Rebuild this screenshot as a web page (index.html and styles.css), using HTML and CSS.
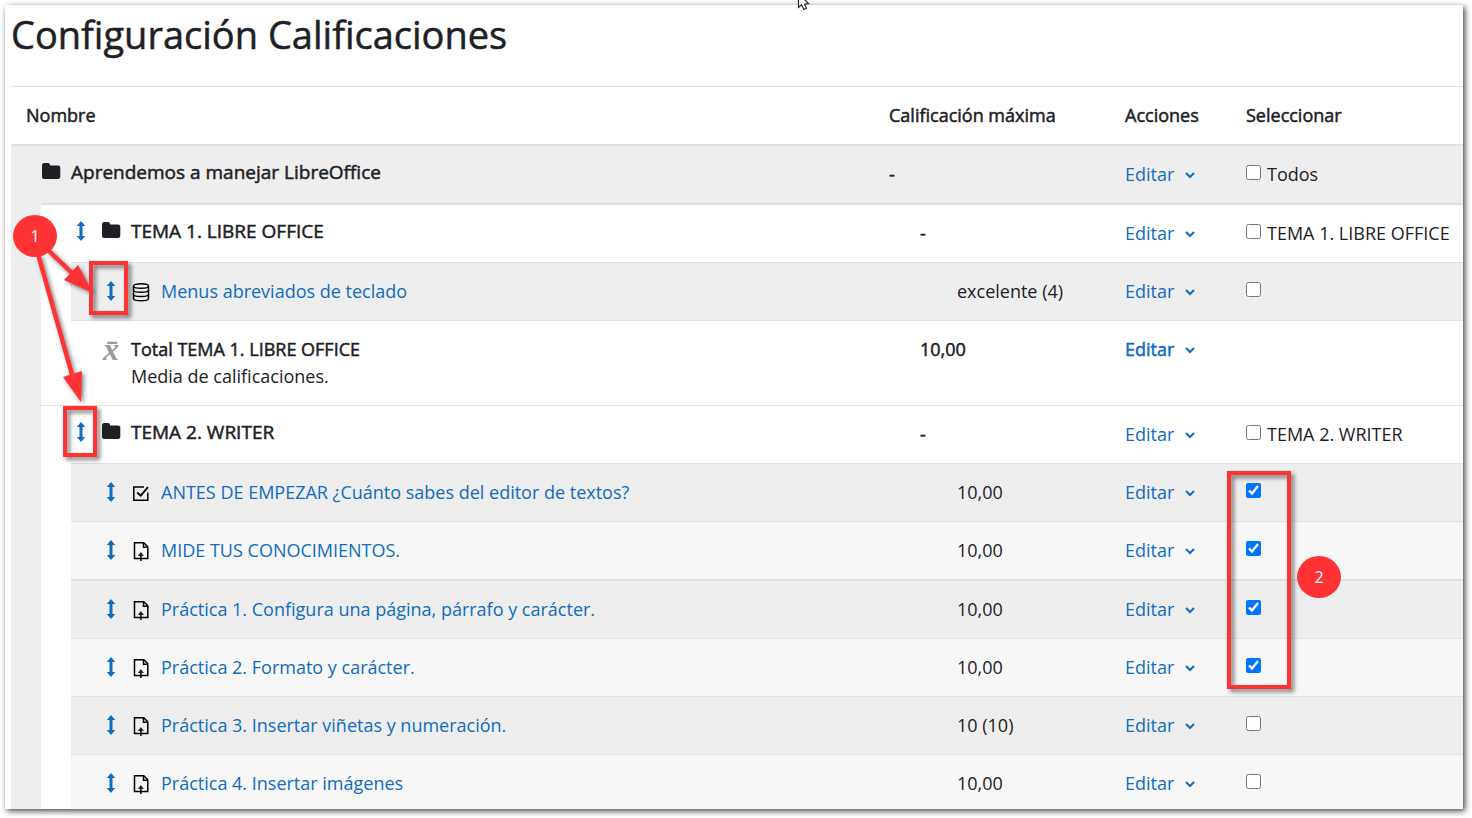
FILE: index.html
```html
<!DOCTYPE html>
<html lang="es">
<head>
<meta charset="utf-8">
<title>Configuración Calificaciones</title>
<link rel="stylesheet" href="styles.css">
</head>
<body>
<svg class="defs" aria-hidden="true">
  <symbol id="move" viewBox="0 0 20 20"><path d="M10 0l4.200 5h-2.700v10h2.700L10 20l-4.200-5h2.700V5H5.800z"/></symbol>
  <symbol id="folder" viewBox="0 0 20 20"><path d="M1 4.500C1 3.100 1.900 2 3.200 2H7c1.200 0 2 .8 2 2v.6h8c1.200 0 2.300.9 2.300 2.200v9c0 1.300-.9 2.200-2.200 2.200H3.200C1.900 18 1 17.100 1 15.800z"/></symbol>
  <symbol id="database" viewBox="0 0 20 20"><g fill="none" stroke="#000" stroke-width="1.500"><ellipse cx="10" cy="4" rx="7.500" ry="2.300"/><path d="M2.500 4v12.500c0 1.300 3.400 2.300 7.500 2.300s7.500-1 7.500-2.300V4M2.500 8c0 1.300 3.400 2.300 7.500 2.300s7.500-1 7.500-2.300M2.500 12.200c0 1.300 3.400 2.300 7.500 2.300s7.500-1 7.500-2.300"/></g></symbol>
  <symbol id="quiz" viewBox="0 0 20 20"><g fill="none" stroke="#000" stroke-width="1.500"><path d="M13 4H2.800v13.300h14V9.500"/><path d="M6.200 9.500l3.500 3.200L17 4.200" stroke-width="1.800"/></g></symbol>
  <symbol id="assign" viewBox="0 0 20 20"><g fill="none" stroke="#000" stroke-width="1.500"><path d="M9.900 17.500H3.500V1.800h9.300l4 4v11.700H9.900V20v-6"/><path d="M12.500 2v4.300H17"/></g><path d="M9.900 11l3 4h-6z"/></symbol>
  <symbol id="chevron" viewBox="0 0 12 12"><path d="M2 4l4 4 4-4" fill="none" stroke="#0f6cbf" stroke-width="2"/></symbol>
</svg>
<main class="card">
  <h1>Configuración Calificaciones</h1>
  <table>
    <colgroup><col class="c-strip"><col class="c-strip"><col><col class="c-max"><col class="c-act"><col class="c-sel"></colgroup>
    <thead>
      <tr><th colspan="3">Nombre</th><th>Calificación máxima</th><th>Acciones</th><th>Seleccionar</th></tr>
    </thead>
    <tbody>
      <tr class="odd">
        <td colspan="3"><div class="name cat"><svg class="icon"><use href="#folder"/></svg><span>Aprendemos a manejar LibreOffice</span></div></td>
        <td class="strong">-</td>
        <td><a class="edit" href="#">Editar<svg><use href="#chevron"/></svg></a></td>
        <td><label><input type="checkbox">Todos</label></td>
      </tr>
      <tr class="thick-top">
        <td class="strip gray" rowspan="11"></td>
        <td colspan="2"><div class="name cat"><svg class="icon move"><use href="#move"/></svg><svg class="icon"><use href="#folder"/></svg><span>TEMA 1. LIBRE OFFICE</span></div></td>
        <td class="strong l1">-</td>
        <td><a class="edit" href="#">Editar<svg><use href="#chevron"/></svg></a></td>
        <td><label><input type="checkbox">TEMA 1. LIBRE OFFICE</label></td>
      </tr>
      <tr class="odd">
        <td class="strip" rowspan="2"></td>
        <td><div class="name"><svg class="icon move"><use href="#move"/></svg><svg class="icon mod"><use href="#database"/></svg><a href="#">Menus abreviados de teclado</a></div></td>
        <td class="l2">excelente (4)</td>
        <td><a class="edit" href="#">Editar<svg><use href="#chevron"/></svg></a></td>
        <td><label><input type="checkbox" aria-label="Menus abreviados de teclado"></label></td>
      </tr>
      <tr>
        <td><div class="name"><span class="mean" aria-hidden="true">x̄</span><span><b>Total TEMA 1. LIBRE OFFICE</b><br>Media de calificaciones.</span></div></td>
        <td class="strong l1">10,00</td>
        <td><a class="edit strong" href="#">Editar<svg><use href="#chevron"/></svg></a></td>
        <td></td>
      </tr>
      <tr>
        <td colspan="2"><div class="name cat"><svg class="icon move"><use href="#move"/></svg><svg class="icon"><use href="#folder"/></svg><span>TEMA 2. WRITER</span></div></td>
        <td class="strong l1">-</td>
        <td><a class="edit" href="#">Editar<svg><use href="#chevron"/></svg></a></td>
        <td><label><input type="checkbox">TEMA 2. WRITER</label></td>
      </tr>
      <tr class="odd">
        <td class="strip" rowspan="7"></td>
        <td><div class="name"><svg class="icon move"><use href="#move"/></svg><svg class="icon mod"><use href="#quiz"/></svg><a href="#">ANTES DE EMPEZAR ¿Cuánto sabes del editor de textos?</a></div></td>
        <td class="l2">10,00</td>
        <td><a class="edit" href="#">Editar<svg><use href="#chevron"/></svg></a></td>
        <td><label><input type="checkbox" checked aria-label="ANTES DE EMPEZAR"></label></td>
      </tr>
      <tr class="even">
        <td><div class="name"><svg class="icon move"><use href="#move"/></svg><svg class="icon mod"><use href="#assign"/></svg><a href="#">MIDE TUS CONOCIMIENTOS.</a></div></td>
        <td class="l2">10,00</td>
        <td><a class="edit" href="#">Editar<svg><use href="#chevron"/></svg></a></td>
        <td><label><input type="checkbox" checked aria-label="MIDE TUS CONOCIMIENTOS"></label></td>
      </tr>
      <tr class="odd thick-top">
        <td><div class="name"><svg class="icon move"><use href="#move"/></svg><svg class="icon mod"><use href="#assign"/></svg><a href="#">Práctica 1. Configura una página, párrafo y carácter.</a></div></td>
        <td class="l2">10,00</td>
        <td><a class="edit" href="#">Editar<svg><use href="#chevron"/></svg></a></td>
        <td><label><input type="checkbox" checked aria-label="Práctica 1"></label></td>
      </tr>
      <tr class="even">
        <td><div class="name"><svg class="icon move"><use href="#move"/></svg><svg class="icon mod"><use href="#assign"/></svg><a href="#">Práctica 2. Formato y carácter.</a></div></td>
        <td class="l2">10,00</td>
        <td><a class="edit" href="#">Editar<svg><use href="#chevron"/></svg></a></td>
        <td><label><input type="checkbox" checked aria-label="Práctica 2"></label></td>
      </tr>
      <tr class="odd">
        <td><div class="name"><svg class="icon move"><use href="#move"/></svg><svg class="icon mod"><use href="#assign"/></svg><a href="#">Práctica 3. Insertar viñetas y numeración.</a></div></td>
        <td class="l2">10 (10)</td>
        <td><a class="edit" href="#">Editar<svg><use href="#chevron"/></svg></a></td>
        <td><label><input type="checkbox" aria-label="Práctica 3"></label></td>
      </tr>
      <tr class="even">
        <td><div class="name"><svg class="icon move"><use href="#move"/></svg><svg class="icon mod"><use href="#assign"/></svg><a href="#">Práctica 4. Insertar imágenes</a></div></td>
        <td class="l2">10,00</td>
        <td><a class="edit" href="#">Editar<svg><use href="#chevron"/></svg></a></td>
        <td><label><input type="checkbox" aria-label="Práctica 4"></label></td>
      </tr>
    </tbody>
  </table>
</main>
<svg class="arrows" width="140" height="420" aria-hidden="true">
  <g stroke="#f33" stroke-width="4.500" fill="#f33"><path d="M48 250L74 275M38 254L73 378"/></g>
  <path fill="#f33" d="M78 265L93 293L64 280zM82 371L81 402L63 377z"/>
</svg>
<div class="frame f1"></div>
<div class="frame f2"></div>
<div class="frame f3"></div>
<div class="badge b1">1</div>
<div class="badge b2">2</div>
<svg class="cursor" viewBox="0 0 14 12" aria-hidden="true"><path d="M1.500-4V7.500L4.500 4.800L7 9.500L9.500 8.300L7.500 4.200L11.500 3.500L4-4z" fill="#fff" stroke="#223" stroke-width="1.200"/></svg>
</body>
</html>
```
FILE: styles.css
```css
* { box-sizing: border-box; }
body {
  margin: 0;
  padding: 5px 9px 9px 5px;
  height: 100vh;
  overflow: hidden;
  position: relative;
  background: #fff;
  color: #1d2125;
  font: 400 18px/27px "Open Sans", "Noto Sans", sans-serif;
}
.defs { display: none; }
.card {
  height: 100%;
  overflow: hidden;
  padding-left: 6px;
  background: #fff;
  box-shadow: 2px 2px 6px rgba(0, 0, 0, .75);
}
h1 {
  margin: 0 0 30px;
  padding-top: 8px;
  font-size: 38px;
  line-height: 43px;
}
h1, th, b, .strong, .cat { font-weight: 400; -webkit-text-stroke: 0.5px currentColor; }
table { width: 100%; border-collapse: separate; border-spacing: 0; table-layout: fixed; }
.c-strip { width: 30px; }
.c-max { width: 236px; }
.c-act { width: 121px; }
.c-sel { width: 232px; }
th, td { padding: 15px; text-align: left; vertical-align: top; border-top: 1px solid #dee2e6; }
th { border-bottom: 1px solid #dee2e6; }
td { white-space: nowrap; }
.thick-top td { border-top-width: 2px; }
.odd td { background: #eee; }
.even td { background: #f7f7f7; }
tr td.strip { padding: 0; border: 0; background: #fff; }
tr td.gray { background: #eee; }
td.l1 { padding-left: 46px; }
td.l2 { padding-left: 83px; }
a { color: #0f6cbf; text-decoration: none; }
.name { display: flex; gap: 10px; padding-left: 15px; }
.cat { font-size: 19px; line-height: 23px; }
.icon { width: 20px; height: 20px; flex: none; fill: #1d2125; }
.move { fill: #0f6cbf; margin-top: 3px; }
.mod { margin-top: 4px; }
.cat .move { margin-top: 1px; }
.mean { width: 20px; text-align: center; color: #999; font: italic bold 32px/27px "Liberation Serif", serif; }
.edit { display: inline-flex; align-items: center; gap: 10px; }
.edit svg { width: 12px; height: 12px; }
label { display: flex; align-items: flex-start; gap: 6px; }
input { flex: none; width: 15px; height: 15px; margin: 4px 0 0; }
.arrows { position: absolute; left: 0; top: 0; filter: drop-shadow(2px 2px 2px rgba(0, 0, 0, .5)); }
.frame { position: absolute; border: 4px solid #f33; filter: drop-shadow(3px 3px 2px rgba(0, 0, 0, .5)); }
.f1 { left: 89px; top: 261px; width: 39px; height: 54px; }
.f2 { left: 63px; top: 406px; width: 34px; height: 51px; }
.f3 { right: 181px; top: 471px; width: 64px; height: 218px; }
.badge {
  position: absolute;
  width: 44px;
  height: 42px;
  border-radius: 50%;
  background: #f33;
  color: #fff;
  text-align: center;
  font: 400 16px/42px "Open Sans", sans-serif;
}
.b1 { left: 13px; top: 215px; }
.b2 { right: 131px; top: 556px; }
.cursor { position: absolute; left: 797px; top: 0; width: 14px; height: 12px; }
```
